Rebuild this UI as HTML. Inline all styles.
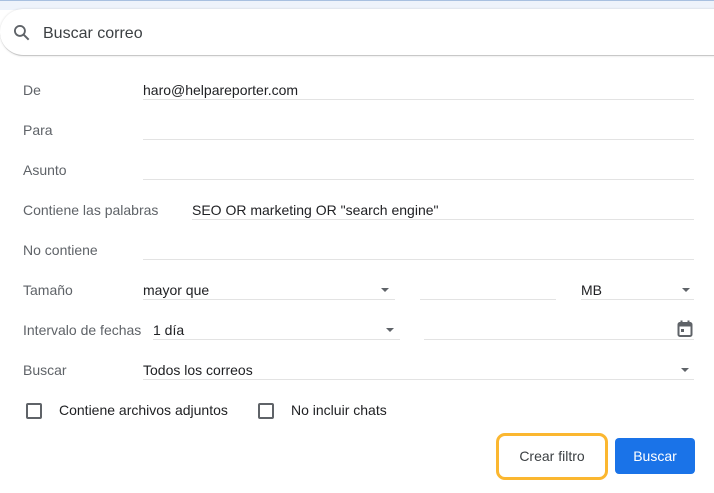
<!DOCTYPE html><html><head><style>
body{margin:0;width:714px;height:493px;background:#fff;font-family:"Liberation Sans",sans-serif;position:relative;overflow:hidden}
.a{position:absolute}
.l{position:absolute;left:23px;font-size:14px;color:#5f6368;line-height:16px}
.v{position:absolute;font-size:14px;color:#202124;line-height:16px}
.u{position:absolute;height:1px;background:#e3e3e3}
.tri{position:absolute;width:0;height:0;border-left:4.5px solid transparent;border-right:4.5px solid transparent;border-top:4.5px solid #5f6368}
.cb{position:absolute;width:12px;height:12px;border:2px solid #5f6368;border-radius:2px}
</style></head><body>
<div class="a" style="left:0;top:0;width:714px;height:9px;background:#eef3fb;border-top:1px solid #a8c0e0"></div>
<div class="a" style="left:0;top:9px;width:740px;height:46px;background:#fff;border-radius:24px 0 0 24px;border-bottom:1px solid #c8c8c8;box-shadow:0 0 2px rgba(0,0,0,.15)"></div>
<svg class="a" style="left:12px;top:23px" width="20" height="20" viewBox="0 0 24 24"><circle cx="9.5" cy="9.5" r="6" fill="none" stroke="#5f6368" stroke-width="2.2"/><path d="M14 14l6 6" stroke="#5f6368" stroke-width="2.4"/></svg>
<div class="v" style="left:43px;top:25px;font-size:16px;color:#3c4043;line-height:18px">Buscar correo</div>

<div class="l" style="top:82px">De</div><div class="v" style="left:143px;top:82px">haro@helpareporter.com</div><div class="u" style="left:143px;top:99px;width:551px"></div>
<div class="l" style="top:122px">Para</div><div class="u" style="left:143px;top:139px;width:551px"></div>
<div class="l" style="top:162px">Asunto</div><div class="u" style="left:143px;top:179px;width:551px"></div>
<div class="l" style="top:202px">Contiene las palabras</div><div class="v" style="left:192px;top:202px">SEO OR marketing OR "search engine"</div><div class="u" style="left:192px;top:219px;width:502px"></div>
<div class="l" style="top:242px">No contiene</div><div class="u" style="left:143px;top:259px;width:551px"></div>
<div class="l" style="top:282px">Tamaño</div><div class="v" style="left:143px;top:282px">mayor que</div><div class="tri" style="left:381px;top:288px"></div><div class="u" style="left:143px;top:299px;width:252px"></div>
<div class="u" style="left:420px;top:299px;width:136px"></div>
<div class="v" style="left:581px;top:282px">MB</div><div class="tri" style="left:682px;top:288px"></div><div class="u" style="left:581px;top:299px;width:113px"></div>
<div class="l" style="top:322px">Intervalo de fechas</div><div class="v" style="left:153px;top:322px">1 día</div><div class="tri" style="left:386px;top:328px"></div><div class="u" style="left:153px;top:339px;width:247px"></div>
<div class="u" style="left:424px;top:339px;width:270px"></div>
<svg class="a" style="left:677px;top:320px" width="16" height="18" viewBox="0 0 16 18"><rect x="1.5" y="3" width="13" height="13" rx="1.5" fill="none" stroke="#5f6368" stroke-width="2"/><rect x="1.5" y="3" width="13" height="3.5" fill="#5f6368"/><path d="M4.5 0.5v3M11.5 0.5v3" stroke="#5f6368" stroke-width="2"/><rect x="4" y="9" width="3" height="3" fill="#5f6368"/></svg>
<div class="l" style="top:362px">Buscar</div><div class="v" style="left:143px;top:362px">Todos los correos</div><div class="tri" style="left:681px;top:368px"></div><div class="u" style="left:143px;top:379px;width:551px"></div>
<div class="cb" style="left:26px;top:403px"></div><div class="v" style="left:59px;top:402px">Contiene archivos adjuntos</div>
<div class="cb" style="left:258px;top:403px"></div><div class="v" style="left:291px;top:402px">No incluir chats</div>
<div class="a" style="left:496px;top:433px;width:106px;height:41px;border:3px solid #fbb730;border-radius:9px;font-size:14px;color:#3c4043;line-height:41px;text-align:center">Crear filtro</div>
<div class="a" style="left:615px;top:438px;width:80px;height:36px;background:#1a73e8;border-radius:4px;font-size:14px;color:#fff;line-height:36px;text-align:center">Buscar</div>
</body></html>
